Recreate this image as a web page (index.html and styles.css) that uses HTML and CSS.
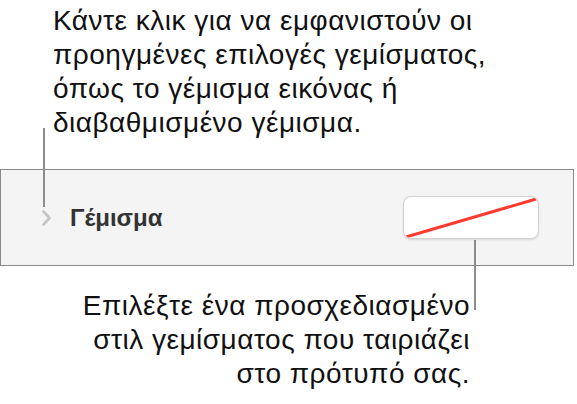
FILE: index.html
```html
<!DOCTYPE html>
<html lang="el">
<head>
    <meta charset="UTF-8">
    <meta name="viewport" content="width=device-width, initial-scale=1.0">
    <title>Γέμισμα</title>
    <link rel="stylesheet" href="styles.css">
</head>
<body>

    <div class="figure">
        <!-- Callout above the panel -->
        <p class="callout callout-top">
            Κάντε κλικ για να εμφανιστούν οι<br>
            προηγμένες επιλογές γεμίσματος,<br>
            όπως το γέμισμα εικόνας ή<br>
            διαβαθμισμένο γέμισμα.
        </p>

        <!-- Fill row of the format sidebar -->
        <div class="fill-panel">
            <span class="disclosure">
                <svg width="11" height="18" viewBox="0 0 11 18">
                    <path d="M2.5 2.5 L8.5 9 L2.5 15.5" fill="none" stroke="#c4c4c4" stroke-width="2.6" stroke-linecap="round" stroke-linejoin="round"/>
                </svg>
            </span>
            <span class="fill-label">Γέμισμα</span>
            <button class="swatch">
                <svg width="136" height="42" viewBox="0 0 136 42" preserveAspectRatio="none">
                    <line x1="2" y1="40" x2="134" y2="2" stroke="#ff3b30" stroke-width="3"/>
                </svg>
            </button>
        </div>

        <!-- Callout below the panel -->
        <p class="callout callout-bottom">
            Επιλέξτε ένα προσχεδιασμένο<br>
            στιλ γεμίσματος που ταιριάζει<br>
            στο πρότυπό σας.
        </p>

        <!-- Leader lines -->
        <span class="leader leader-top"></span>
        <span class="leader leader-bottom"></span>
    </div>

</body>
</html>
```

FILE: styles.css
```css
/* Global Styles */
body {
    font-family: "Liberation Sans", Arial, sans-serif;
    margin: 0;
    padding: 0;
    background: #fff;
    color: #111;
}

.figure {
    position: relative;
    width: 577px;
    height: 404px;
    display: flex;
    flex-direction: column;
}

/* Callouts */
.callout {
    margin: 0;
    font-size: 28px;
    line-height: 34px;
    letter-spacing: 0.5px;
    color: #111;
    white-space: nowrap;
}

.callout-top {
    padding: 4px 0 0 53px;
}

.callout-bottom {
    margin-top: 23px;
    padding-right: 107px;
    text-align: right;
}

/* Fill panel */
.fill-panel {
    margin-top: 29px;
    width: 574px;
    height: 97px;
    box-sizing: border-box;
    border: 1px solid #8a8a8a;
    background: #f4f4f4;
    display: flex;
    align-items: center;
    padding: 0 34px 0 40px;
}

.disclosure {
    display: flex;
    width: 11px;
    height: 18px;
}

.fill-label {
    margin-left: 18px;
    font-size: 24px;
    font-weight: bold;
    color: #333;
}

.swatch {
    margin-left: auto;
    width: 136px;
    height: 43px;
    padding: 0;
    border: 1px solid #d2d2d2;
    border-radius: 8px;
    background: #fff;
    box-shadow: 0 1px 2px rgba(0, 0, 0, 0.12);
    overflow: hidden;
    display: flex;
}

.swatch svg {
    display: block;
}

/* Leader lines cross the panel edge */
.leader {
    position: absolute;
    width: 2px;
    background: #8c8c8c;
}

.leader-top {
    left: 43px;
    top: 128px;
    height: 79px;
}

.leader-bottom {
    left: 474px;
    top: 240px;
    height: 70px;
}
```
